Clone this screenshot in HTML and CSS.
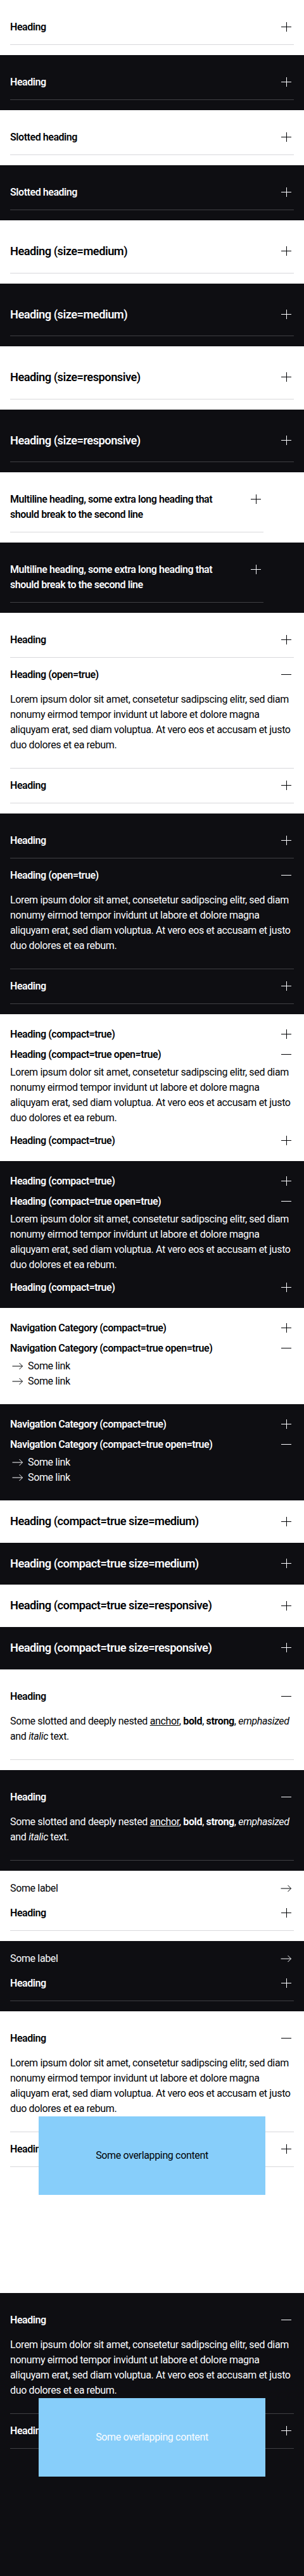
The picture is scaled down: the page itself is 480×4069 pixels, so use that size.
FILE: index.html
```html
<!DOCTYPE html>
<html lang="en">
<head>
<meta charset="utf-8">
<title>Accordion</title>
<link rel="stylesheet" href="styles.css">
</head>
<body>
<svg class="sprite" aria-hidden="true">
  <symbol id="i-plus" viewBox="0 0 24 24"><path d="M4 11.5h16M12.5 4v15"/></symbol>
  <symbol id="i-minus" viewBox="0 0 24 24"><path d="M4 11.5h16"/></symbol>
  <symbol id="i-arrow" viewBox="0 0 24 24"><path d="M3.5 12h16M14.5 7l5 5-5 5"/></symbol>
</svg>

<div class="pg light">
  <div class="acc"><h2 class="acc-h"><button class="acc-btn"><span class="acc-title">Heading</span><span class="acc-icon"><svg class="icon"><use href="#i-plus"/></svg></span></button></h2></div>
</div>
<div class="pg dark">
  <div class="acc"><h2 class="acc-h"><button class="acc-btn"><span class="acc-title">Heading</span><span class="acc-icon"><svg class="icon"><use href="#i-plus"/></svg></span></button></h2></div>
</div>
<div class="pg light">
  <div class="acc"><h2 class="acc-h"><button class="acc-btn"><span class="acc-title">Slotted heading</span><span class="acc-icon"><svg class="icon"><use href="#i-plus"/></svg></span></button></h2></div>
</div>
<div class="pg dark">
  <div class="acc"><h2 class="acc-h"><button class="acc-btn"><span class="acc-title">Slotted heading</span><span class="acc-icon"><svg class="icon"><use href="#i-plus"/></svg></span></button></h2></div>
</div>

<div class="pg light">
  <div class="acc medium"><h2 class="acc-h"><button class="acc-btn"><span class="acc-title">Heading (size=medium)</span><span class="acc-icon"><svg class="icon"><use href="#i-plus"/></svg></span></button></h2></div>
</div>
<div class="pg dark">
  <div class="acc medium"><h2 class="acc-h"><button class="acc-btn"><span class="acc-title">Heading (size=medium)</span><span class="acc-icon"><svg class="icon"><use href="#i-plus"/></svg></span></button></h2></div>
</div>
<div class="pg light">
  <div class="acc medium"><h2 class="acc-h"><button class="acc-btn"><span class="acc-title">Heading (size=responsive)</span><span class="acc-icon"><svg class="icon"><use href="#i-plus"/></svg></span></button></h2></div>
</div>
<div class="pg dark">
  <div class="acc medium"><h2 class="acc-h"><button class="acc-btn"><span class="acc-title">Heading (size=responsive)</span><span class="acc-icon"><svg class="icon"><use href="#i-plus"/></svg></span></button></h2></div>
</div>

<div class="pg light">
  <div class="acc narrow"><h2 class="acc-h"><button class="acc-btn"><span class="acc-title">Multiline heading, some extra long heading that should break to the second line</span><span class="acc-icon"><svg class="icon"><use href="#i-plus"/></svg></span></button></h2></div>
</div>
<div class="pg dark">
  <div class="acc narrow"><h2 class="acc-h"><button class="acc-btn"><span class="acc-title">Multiline heading, some extra long heading that should break to the second line</span><span class="acc-icon"><svg class="icon"><use href="#i-plus"/></svg></span></button></h2></div>
</div>

<div class="pg light">
  <div class="acc"><h2 class="acc-h"><button class="acc-btn"><span class="acc-title">Heading</span><span class="acc-icon"><svg class="icon"><use href="#i-plus"/></svg></span></button></h2></div>
  <div class="acc"><h2 class="acc-h"><button class="acc-btn"><span class="acc-title">Heading (open=true)</span><span class="acc-icon"><svg class="icon"><use href="#i-minus"/></svg></span></button></h2>
    <div class="acc-content"><p>Lorem ipsum dolor sit amet, consetetur sadipscing elitr, sed diam nonumy eirmod tempor invidunt ut labore et dolore magna aliquyam erat, sed diam voluptua. At vero eos et accusam et justo duo dolores et ea rebum.</p></div>
  </div>
  <div class="acc"><h2 class="acc-h"><button class="acc-btn"><span class="acc-title">Heading</span><span class="acc-icon"><svg class="icon"><use href="#i-plus"/></svg></span></button></h2></div>
</div>
<div class="pg dark">
  <div class="acc"><h2 class="acc-h"><button class="acc-btn"><span class="acc-title">Heading</span><span class="acc-icon"><svg class="icon"><use href="#i-plus"/></svg></span></button></h2></div>
  <div class="acc"><h2 class="acc-h"><button class="acc-btn"><span class="acc-title">Heading (open=true)</span><span class="acc-icon"><svg class="icon"><use href="#i-minus"/></svg></span></button></h2>
    <div class="acc-content"><p>Lorem ipsum dolor sit amet, consetetur sadipscing elitr, sed diam nonumy eirmod tempor invidunt ut labore et dolore magna aliquyam erat, sed diam voluptua. At vero eos et accusam et justo duo dolores et ea rebum.</p></div>
  </div>
  <div class="acc"><h2 class="acc-h"><button class="acc-btn"><span class="acc-title">Heading</span><span class="acc-icon"><svg class="icon"><use href="#i-plus"/></svg></span></button></h2></div>
</div>

<div class="pg light">
  <div class="acc compact"><h2 class="acc-h"><button class="acc-btn"><span class="acc-title">Heading (compact=true)</span><span class="acc-icon"><svg class="icon"><use href="#i-plus"/></svg></span></button></h2></div>
  <div class="acc compact"><h2 class="acc-h"><button class="acc-btn"><span class="acc-title">Heading (compact=true open=true)</span><span class="acc-icon"><svg class="icon"><use href="#i-minus"/></svg></span></button></h2>
    <div class="acc-content"><p>Lorem ipsum dolor sit amet, consetetur sadipscing elitr, sed diam nonumy eirmod tempor invidunt ut labore et dolore magna aliquyam erat, sed diam voluptua. At vero eos et accusam et justo duo dolores et ea rebum.</p></div>
  </div>
  <div class="acc compact"><h2 class="acc-h"><button class="acc-btn"><span class="acc-title">Heading (compact=true)</span><span class="acc-icon"><svg class="icon"><use href="#i-plus"/></svg></span></button></h2></div>
</div>
<div class="pg dark">
  <div class="acc compact"><h2 class="acc-h"><button class="acc-btn"><span class="acc-title">Heading (compact=true)</span><span class="acc-icon"><svg class="icon"><use href="#i-plus"/></svg></span></button></h2></div>
  <div class="acc compact"><h2 class="acc-h"><button class="acc-btn"><span class="acc-title">Heading (compact=true open=true)</span><span class="acc-icon"><svg class="icon"><use href="#i-minus"/></svg></span></button></h2>
    <div class="acc-content"><p>Lorem ipsum dolor sit amet, consetetur sadipscing elitr, sed diam nonumy eirmod tempor invidunt ut labore et dolore magna aliquyam erat, sed diam voluptua. At vero eos et accusam et justo duo dolores et ea rebum.</p></div>
  </div>
  <div class="acc compact"><h2 class="acc-h"><button class="acc-btn"><span class="acc-title">Heading (compact=true)</span><span class="acc-icon"><svg class="icon"><use href="#i-plus"/></svg></span></button></h2></div>
</div>

<div class="pg light">
  <div class="acc compact"><h2 class="acc-h"><button class="acc-btn"><span class="acc-title">Navigation Category (compact=true)</span><span class="acc-icon"><svg class="icon"><use href="#i-plus"/></svg></span></button></h2></div>
  <div class="acc compact"><h2 class="acc-h"><button class="acc-btn"><span class="acc-title">Navigation Category (compact=true open=true)</span><span class="acc-icon"><svg class="icon"><use href="#i-minus"/></svg></span></button></h2>
    <div class="acc-content">
      <a class="link" href="#"><svg class="icon"><use href="#i-arrow"/></svg><span>Some link</span></a>
      <a class="link" href="#"><svg class="icon"><use href="#i-arrow"/></svg><span>Some link</span></a>
    </div>
  </div>
</div>
<div class="pg dark">
  <div class="acc compact"><h2 class="acc-h"><button class="acc-btn"><span class="acc-title">Navigation Category (compact=true)</span><span class="acc-icon"><svg class="icon"><use href="#i-plus"/></svg></span></button></h2></div>
  <div class="acc compact"><h2 class="acc-h"><button class="acc-btn"><span class="acc-title">Navigation Category (compact=true open=true)</span><span class="acc-icon"><svg class="icon"><use href="#i-minus"/></svg></span></button></h2>
    <div class="acc-content">
      <a class="link" href="#"><svg class="icon"><use href="#i-arrow"/></svg><span>Some link</span></a>
      <a class="link" href="#"><svg class="icon"><use href="#i-arrow"/></svg><span>Some link</span></a>
    </div>
  </div>
</div>

<div class="pg light">
  <div class="acc compact medium"><h2 class="acc-h"><button class="acc-btn"><span class="acc-title">Heading (compact=true size=medium)</span><span class="acc-icon"><svg class="icon"><use href="#i-plus"/></svg></span></button></h2></div>
</div>
<div class="pg dark">
  <div class="acc compact medium"><h2 class="acc-h"><button class="acc-btn"><span class="acc-title">Heading (compact=true size=medium)</span><span class="acc-icon"><svg class="icon"><use href="#i-plus"/></svg></span></button></h2></div>
</div>
<div class="pg light">
  <div class="acc compact medium"><h2 class="acc-h"><button class="acc-btn"><span class="acc-title">Heading (compact=true size=responsive)</span><span class="acc-icon"><svg class="icon"><use href="#i-plus"/></svg></span></button></h2></div>
</div>
<div class="pg dark">
  <div class="acc compact medium"><h2 class="acc-h"><button class="acc-btn"><span class="acc-title">Heading (compact=true size=responsive)</span><span class="acc-icon"><svg class="icon"><use href="#i-plus"/></svg></span></button></h2></div>
</div>

<div class="pg light">
  <div class="acc"><h2 class="acc-h"><button class="acc-btn"><span class="acc-title">Heading</span><span class="acc-icon"><svg class="icon"><use href="#i-minus"/></svg></span></button></h2>
    <div class="acc-content"><p>Some slotted and deeply nested <a href="#">anchor</a>, <b>bold</b>, <strong>strong</strong>, <em>emphasized</em> and <i>italic</i> text.</p></div>
  </div>
</div>
<div class="pg dark">
  <div class="acc"><h2 class="acc-h"><button class="acc-btn"><span class="acc-title">Heading</span><span class="acc-icon"><svg class="icon"><use href="#i-minus"/></svg></span></button></h2>
    <div class="acc-content"><p>Some slotted and deeply nested <a href="#">anchor</a>, <b>bold</b>, <strong>strong</strong>, <em>emphasized</em> and <i>italic</i> text.</p></div>
  </div>
</div>

<div class="pg light">
  <a class="link link-end" href="#"><span>Some label</span><svg class="icon"><use href="#i-arrow"/></svg></a>
  <div class="acc"><h2 class="acc-h"><button class="acc-btn"><span class="acc-title">Heading</span><span class="acc-icon"><svg class="icon"><use href="#i-plus"/></svg></span></button></h2></div>
</div>
<div class="pg dark">
  <a class="link link-end" href="#"><span>Some label</span><svg class="icon"><use href="#i-arrow"/></svg></a>
  <div class="acc"><h2 class="acc-h"><button class="acc-btn"><span class="acc-title">Heading</span><span class="acc-icon"><svg class="icon"><use href="#i-plus"/></svg></span></button></h2></div>
</div>

<div class="pg light">
  <div class="overlap">
    <div class="acc"><h2 class="acc-h"><button class="acc-btn"><span class="acc-title">Heading</span><span class="acc-icon"><svg class="icon"><use href="#i-minus"/></svg></span></button></h2>
      <div class="acc-content"><p>Lorem ipsum dolor sit amet, consetetur sadipscing elitr, sed diam nonumy eirmod tempor invidunt ut labore et dolore magna aliquyam erat, sed diam voluptua. At vero eos et accusam et justo duo dolores et ea rebum.</p></div>
    </div>
    <div class="acc"><h2 class="acc-h"><button class="acc-btn"><span class="acc-title">Heading</span><span class="acc-icon"><svg class="icon"><use href="#i-plus"/></svg></span></button></h2></div>
    <div class="overlap-box">Some overlapping content</div>
  </div>
</div>
<div class="pg dark">
  <div class="overlap">
    <div class="acc"><h2 class="acc-h"><button class="acc-btn"><span class="acc-title">Heading</span><span class="acc-icon"><svg class="icon"><use href="#i-minus"/></svg></span></button></h2>
      <div class="acc-content"><p>Lorem ipsum dolor sit amet, consetetur sadipscing elitr, sed diam nonumy eirmod tempor invidunt ut labore et dolore magna aliquyam erat, sed diam voluptua. At vero eos et accusam et justo duo dolores et ea rebum.</p></div>
    </div>
    <div class="acc"><h2 class="acc-h"><button class="acc-btn"><span class="acc-title">Heading</span><span class="acc-icon"><svg class="icon"><use href="#i-plus"/></svg></span></button></h2></div>
    <div class="overlap-box">Some overlapping content</div>
  </div>
</div>
</body>
</html>
```

FILE: styles.css
```css
html {
  background: #0e0e12;
}

body {
  margin: 0;
  font-family: Roboto, "Noto Sans", "Liberation Sans", sans-serif;
  font-size: 16px;
  line-height: 24px;
  -webkit-font-smoothing: antialiased;
}

.sprite {
  position: absolute;
  width: 0;
  height: 0;
  overflow: hidden;
}

.icon {
  width: 24px;
  height: 24px;
  flex: none;
  fill: none;
  stroke: currentColor;
  stroke-width: 1;
}

.pg {
  padding: 16px;
}

.pg.light {
  background: #ffffff;
  color: #010205;
  --border: #d8d8db;
}

.pg.dark {
  background: #0e0e12;
  color: #fbfcff;
  --border: #404044;
}

.acc {
  border-bottom: 1px solid var(--border);
}

.acc.compact {
  border-bottom: 0;
}

.acc.narrow {
  max-width: 400px;
}

.acc-h {
  margin: 0;
  font-size: inherit;
  font-weight: inherit;
}

.acc-btn {
  display: flex;
  align-items: flex-start;
  justify-content: space-between;
  gap: 24px;
  width: 100%;
  margin: 0;
  padding: 15px 0;
  border: 0;
  background: transparent;
  color: inherit;
  font-family: inherit;
  font-size: 16px;
  line-height: 24px;
  font-weight: 600;
  letter-spacing: -0.028em;
  text-align: left;
  cursor: pointer;
}

.acc-title {
  flex: 1;
  min-width: 0;
}

.acc-icon {
  flex: none;
  display: flex;
  align-items: center;
  height: 24px;
}

.acc.medium .acc-btn {
  font-size: 18.29px;
  line-height: 26.57px;
  padding: 20px 0;
}

.acc.medium .acc-icon {
  height: 26.57px;
}

.acc.compact .acc-btn {
  padding: 4px 0;
}

.acc-content {
  padding: 0 0 24px;
  font-size: 16px;
  line-height: 24px;
  letter-spacing: -0.022em;
}

.acc.compact .acc-content {
  padding-bottom: 8px;
}

.acc-content p {
  margin: 0;
}

.acc-content p a {
  color: inherit;
  text-decoration: underline;
}

.link {
  display: flex;
  align-items: center;
  gap: 4px;
  color: inherit;
  text-decoration: none;
  font-size: 16px;
  line-height: 24px;
  letter-spacing: -0.022em;
}

.link-end {
  justify-content: space-between;
}

.overlap {
  position: relative;
  height: 413px;
}

.overlap-box {
  position: absolute;
  top: 150px;
  left: 10%;
  width: 80%;
  height: 124px;
  display: flex;
  align-items: center;
  justify-content: center;
  background: #87cefa;
  font-size: 16px;
  letter-spacing: -0.022em;
}
```
